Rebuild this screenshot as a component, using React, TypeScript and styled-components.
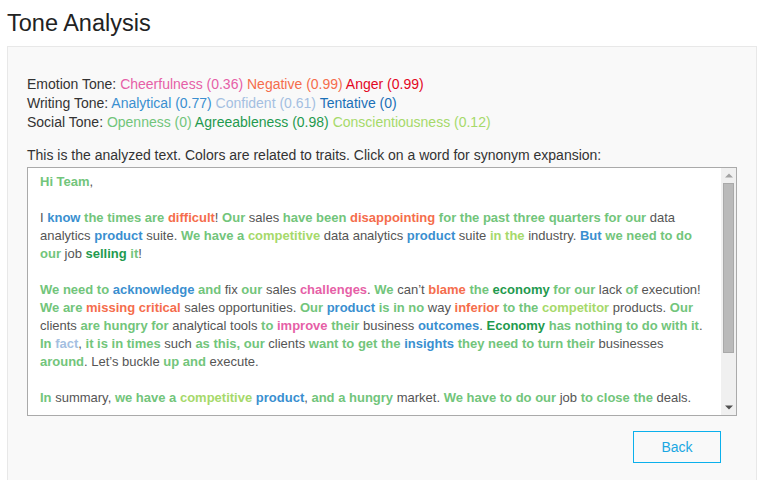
import React from "react";
import styled, { createGlobalStyle } from "styled-components";

const GlobalStyle = createGlobalStyle`
  html, body { margin: 0; padding: 0; background: #ffffff; }
  body { font-family: "Liberation Sans", Arial, sans-serif; }
`;

type Tone =
  | "open"
  | "consc"
  | "agree"
  | "analytic"
  | "confident"
  | "tentative"
  | "cheer"
  | "negative"
  | "anger"
  | undefined;

const toneColors: Record<string, string> = {
  open: "#72c57b",
  consc: "#a6d96a",
  agree: "#1f9a4e",
  analytic: "#3a8fd0",
  confident: "#a4bfe1",
  tentative: "#1b70b7",
  cheer: "#e65fa7",
  negative: "#f56d4c",
  anger: "#e3071f",
};

const Page = styled.div`
  padding: 10px 5px 0 7px;
`;

const Title = styled.h1`
  margin: 0 0 9px 0;
  font-size: 23.5px;
  line-height: 27px;
  font-weight: normal;
  color: #222222;
`;

const Panel = styled.section`
  background: #f9f9f9;
  border: 1px solid #e8e8e8;
  padding: 28px 19px 30px 19px;
`;

const Summary = styled.div`
  font-size: 14px;
  line-height: 19px;
  color: #333333;
`;

const SummaryLine = styled.div``;

const Trait = styled.span<{ $tone: Tone }>`
  color: ${(p) => (p.$tone ? toneColors[p.$tone] : "#333")};
`;

const Caption = styled.div`
  margin-top: 14px;
  margin-bottom: 2px;
  font-size: 14px;
  line-height: 19px;
  color: #333333;
`;

const TextBox = styled.div`
  display: flex;
  height: 249px;
  box-sizing: border-box;
  border: 1px solid #aaaaaa;
  background: #ffffff;
`;

const TextContent = styled.div`
  flex: 1;
  overflow: hidden;
  padding: 5px 11px 0 12px;
  font-size: 13px;
  line-height: 18px;
  color: #555555;
`;

const Paragraph = styled.p`
  margin: 0 0 18px 0;
  &:last-child {
    margin-bottom: 0;
  }
`;

const Word = styled.span<{ $tone: Tone }>`
  color: ${(p) => (p.$tone ? toneColors[p.$tone] : "#555")};
  font-weight: ${(p) => (p.$tone ? "bold" : "normal")};
  cursor: ${(p) => (p.$tone ? "pointer" : "default")};
`;

const ScrollBar = styled.div`
  width: 15px;
  display: flex;
  flex-direction: column;
  background: #f0f0f0;
`;

const ScrollButton = styled.div`
  height: 15px;
  display: flex;
  align-items: center;
  justify-content: center;
`;

const Track = styled.div`
  flex: 1;
  display: flex;
  flex-direction: column;
`;

const Thumb = styled.div`
  height: 170px;
  margin: 0 2px 0 2px;
  background: #bababa;
  border: 1px solid #a9a9a9;
  box-sizing: border-box;
`;

const ButtonRow = styled.div`
  display: flex;
  justify-content: flex-end;
  padding-right: 16px;
  margin-top: 15px;
`;

const BackButton = styled.button`
  width: 88px;
  height: 32px;
  box-sizing: border-box;
  border: 1px solid #0bb0ec;
  background: transparent;
  color: #1aa7e2;
  font-family: "Liberation Sans", Arial, sans-serif;
  font-size: 14px;
  cursor: pointer;
`;

type Seg = [string, Tone?];

const paragraphs: Seg[][] = [
  [["Hi Team", "open"], [","]],
  [
    ["I "],
    ["know", "analytic"],
    [" "],
    ["the times are", "open"],
    [" "],
    ["difficult", "negative"],
    ["! "],
    ["Our", "open"],
    [" sales "],
    ["have been", "open"],
    [" "],
    ["disappointing", "negative"],
    [" "],
    ["for the past three quarters for our", "open"],
    [" data analytics "],
    ["product", "analytic"],
    [" suite. "],
    ["We have a", "open"],
    [" "],
    ["competitive", "consc"],
    [" data analytics "],
    ["product", "analytic"],
    [" suite "],
    ["in the", "consc"],
    [" industry. "],
    ["But", "analytic"],
    [" "],
    ["we need to do our", "open"],
    [" job "],
    ["selling", "agree"],
    [" "],
    ["it", "open"],
    ["!"],
  ],
  [
    ["We need to", "open"],
    [" "],
    ["acknowledge", "analytic"],
    [" "],
    ["and", "open"],
    [" fix "],
    ["our", "open"],
    [" sales "],
    ["challenges", "cheer"],
    [". "],
    ["We", "open"],
    [" can\u2019t "],
    ["blame", "negative"],
    [" "],
    ["the", "open"],
    [" "],
    ["economy", "agree"],
    [" "],
    ["for our", "open"],
    [" lack "],
    ["of", "open"],
    [" execution! "],
    ["We are", "open"],
    [" "],
    ["missing critical", "negative"],
    [" sales opportunities. "],
    ["Our", "open"],
    [" "],
    ["product", "analytic"],
    [" "],
    ["is in no", "open"],
    [" way "],
    ["inferior", "negative"],
    [" "],
    ["to the", "open"],
    [" "],
    ["competitor", "consc"],
    [" products. "],
    ["Our", "open"],
    [" clients "],
    ["are hungry for", "open"],
    [" analytical tools "],
    ["to", "open"],
    [" "],
    ["improve", "cheer"],
    [" "],
    ["their", "open"],
    [" business "],
    ["outcomes", "analytic"],
    [". "],
    ["Economy", "agree"],
    [" "],
    ["has nothing to do with it", "open"],
    [". "],
    ["In", "open"],
    [" "],
    ["fact", "confident"],
    [", "],
    ["it is in times", "open"],
    [" such "],
    ["as this, our", "open"],
    [" clients "],
    ["want to get the", "open"],
    [" "],
    ["insights", "analytic"],
    [" "],
    ["they need to turn their", "open"],
    [" businesses "],
    ["around", "open"],
    [". Let\u2019s buckle "],
    ["up and", "open"],
    [" execute."],
  ],
  [
    ["In", "open"],
    [" summary, "],
    ["we have a", "open"],
    [" "],
    ["competitive", "consc"],
    [" "],
    ["product", "analytic"],
    [", "],
    ["and a hungry", "open"],
    [" market. "],
    ["We have to do our", "open"],
    [" job "],
    ["to close the", "open"],
    [" deals."],
  ],
];

const summary: { label: string; traits: [string, Tone][] }[] = [
  {
    label: "Emotion Tone:",
    traits: [
      ["Cheerfulness (0.36)", "cheer"],
      ["Negative (0.99)", "negative"],
      ["Anger (0.99)", "anger"],
    ],
  },
  {
    label: "Writing Tone:",
    traits: [
      ["Analytical (0.77)", "analytic"],
      ["Confident (0.61)", "confident"],
      ["Tentative (0)", "tentative"],
    ],
  },
  {
    label: "Social Tone:",
    traits: [
      ["Openness (0)", "open"],
      ["Agreeableness (0.98)", "agree"],
      ["Conscientiousness (0.12)", "consc"],
    ],
  },
];

const Arrow = ({ up, color }: { up?: boolean; color: string }) => (
  <svg width="8" height="5" viewBox="0 0 8 5">
    {up ? (
      <polygon points="0,4.5 8,4.5 4,0.5" fill={color} />
    ) : (
      <polygon points="0,0.5 8,0.5 4,4.5" fill={color} />
    )}
  </svg>
);

export default function App() {
  return (
    <>
      <GlobalStyle />
      <Page>
        <Title>Tone Analysis</Title>
        <Panel>
          <Summary>
            {summary.map((row) => (
              <SummaryLine key={row.label}>
                {row.label}
                {row.traits.map(([t, tone]) => (
                  <React.Fragment key={t}>
                    {" "}
                    <Trait $tone={tone}>{t}</Trait>
                  </React.Fragment>
                ))}
              </SummaryLine>
            ))}
          </Summary>
          <Caption>
            This is the analyzed text. Colors are related to traits. Click on a word for synonym
            expansion:
          </Caption>
          <TextBox>
            <TextContent>
              {paragraphs.map((p, i) => (
                <Paragraph key={i}>
                  {p.map(([text, tone], j) => (
                    <Word key={j} $tone={tone}>
                      {text}
                    </Word>
                  ))}
                </Paragraph>
              ))}
            </TextContent>
            <ScrollBar>
              <ScrollButton>
                <Arrow up color="#a3a3a3" />
              </ScrollButton>
              <Track>
                <Thumb />
              </Track>
              <ScrollButton>
                <Arrow color="#505050" />
              </ScrollButton>
            </ScrollBar>
          </TextBox>
          <ButtonRow>
            <BackButton>Back</BackButton>
          </ButtonRow>
        </Panel>
      </Page>
    </>
  );
}
